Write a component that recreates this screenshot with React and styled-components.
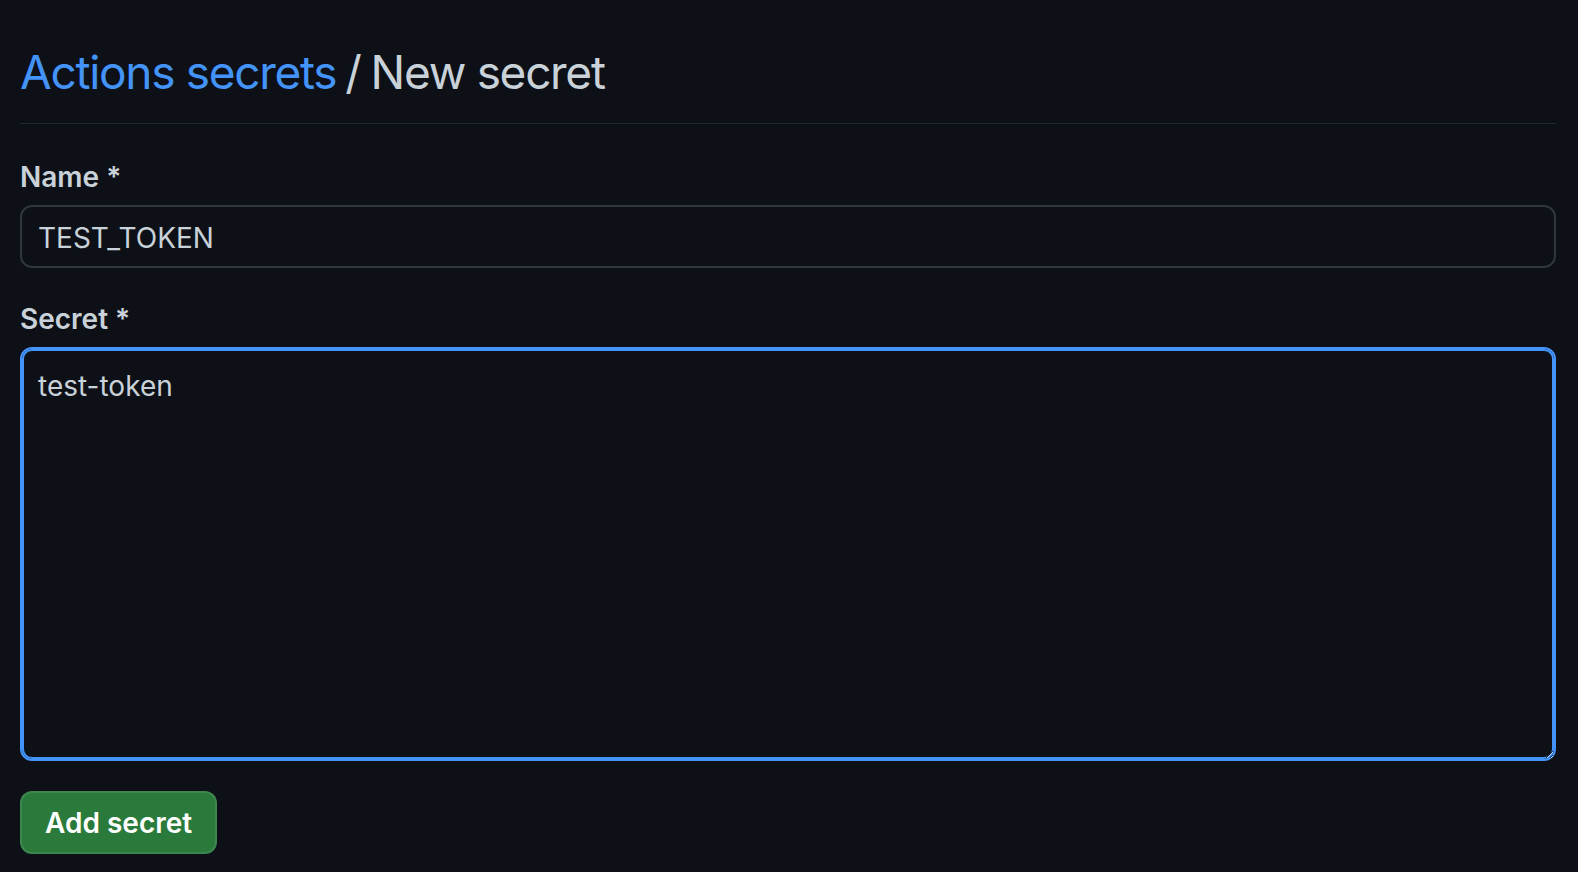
import { createGlobalStyle, styled } from 'styled-components';

const GlobalStyle = createGlobalStyle`
    html, body {
        margin: 0;
        padding: 0;
        background: #0d1117;
    }
    body {
        font-family: Inter, 'Liberation Sans', Arial, sans-serif;
        color: #c9d1d9;
    }
`;

const App = () => {
    return (
        <Page>
            <GlobalStyle />
            <Subhead>
                <HeadLink href="#">Actions secrets</HeadLink>
                <Separator>/</Separator>New secret
            </Subhead>
            <Form onSubmit={(e) => e.preventDefault()}>
                <Field>
                    <Label htmlFor="secret_name">Name *</Label>
                    <Input id="secret_name" type="text" defaultValue="TEST_TOKEN" />
                </Field>
                <Field>
                    <Label htmlFor="secret_value">Secret *</Label>
                    <TextArea id="secret_value" defaultValue="test-token" focused />
                </Field>
                <SubmitButton type="submit">Add secret</SubmitButton>
            </Form>
        </Page>
    );
};

const Page = styled.div`
    display: flex;
    flex-direction: column;
    padding: 43px 22px 0 20px;
    min-height: 872px;
    box-sizing: border-box;
`;
const Subhead = styled.h1`
    margin: 0;
    padding-bottom: 22px;
    border-bottom: 1px solid #21262d;
    font-size: 46px;
    font-weight: 400;
    line-height: 58px;
    letter-spacing: -1.3px;
    color: #c9d1d9;
`;
const HeadLink = styled.a`
    color: #4493f8;
    text-decoration: none;
`;
const Separator = styled.span`
    margin: 0 10px 0 9px;
`;
const Form = styled.form`
    display: flex;
    flex-direction: column;
    align-items: flex-start;
    gap: 30px;
    padding-top: 32px;
`;
const Field = styled.div`
    display: flex;
    flex-direction: column;
    gap: 7px;
    align-self: stretch;
`;
const Label = styled.label`
    font-size: 28px;
    font-weight: 600;
    line-height: 42px;
    color: #c9d1d9;
`;
const Input = styled.input`
    box-sizing: border-box;
    height: 63px;
    padding: 3px 16px 0;
    border: 2px solid #30363d;
    border-radius: 12px;
    background: #0d1117;
    color: #c9d1d9;
    font-family: inherit;
    font-size: 28px;
    outline: none;
`;
const TextArea = styled.textarea`
    box-sizing: border-box;
    height: 414px;
    padding: 16px 16px;
    border: 2px solid ${({ focused }) => (focused ? '#4493f8' : '#30363d')};
    border-radius: 12px;
    box-shadow: ${({ focused }) => (focused ? 'inset 0 0 0 2px #4493f8' : 'none')};
    background: #0d1117;
    color: #c9d1d9;
    font-family: inherit;
    font-size: 28px;
    line-height: 42px;
    resize: vertical;
    outline: none;
`;
const SubmitButton = styled.button`
    box-sizing: border-box;
    height: 63px;
    padding: 0 23px;
    border: 2px solid rgba(240, 246, 252, 0.1);
    border-radius: 12px;
    background: #2a7a3b;
    color: #ffffff;
    font-family: inherit;
    font-size: 28px;
    font-weight: 600;
    cursor: pointer;
`;

export default App;
